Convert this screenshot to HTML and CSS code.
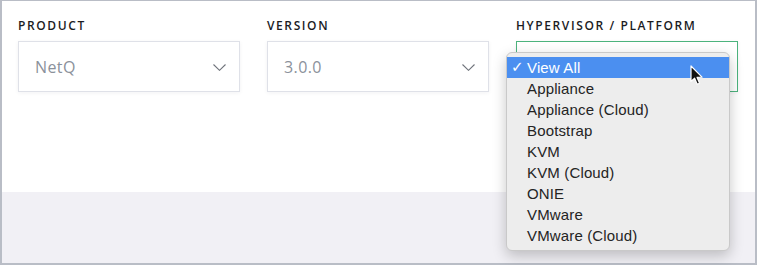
FILE: index.html
```html
<!DOCTYPE html>
<html lang="en">
<head>
    <meta charset="utf-8">
    <title>Downloads</title>
    <link rel="stylesheet" href="styles.css">
</head>
<body>
    <div id="frame">
        <section class="filters">
            <div class="field">
                <label>Product</label>
                <div class="select">
                    <span class="value">NetQ</span>
                    <svg class="chevron" width="13" height="7" viewBox="0 0 13 7"><path d="M0.5 0.5 L6.5 6.3 L12.5 0.5" fill="none" stroke="#6f737b" stroke-width="1.1"/></svg>
                </div>
            </div>
            <div class="field">
                <label>Version</label>
                <div class="select">
                    <span class="value">3.0.0</span>
                    <svg class="chevron" width="13" height="7" viewBox="0 0 13 7"><path d="M0.5 0.5 L6.5 6.3 L12.5 0.5" fill="none" stroke="#6f737b" stroke-width="1.1"/></svg>
                </div>
            </div>
            <div class="field">
                <label>Hypervisor / Platform</label>
                <div class="select focused">
                    <ul class="menu">
                        <li class="selected"><span class="check">✓</span>View All</li>
                        <li>Appliance</li>
                        <li>Appliance (Cloud)</li>
                        <li>Bootstrap</li>
                        <li>KVM</li>
                        <li>KVM (Cloud)</li>
                        <li>ONIE</li>
                        <li>VMware</li>
                        <li>VMware (Cloud)</li>
                    </ul>
                    <svg class="cursor" width="14" height="21" viewBox="0 0 14 21">
                        <path d="M1 1 L1 16.5 L4.6 13.2 L7.2 19.3 L9.6 18.3 L7.1 12.4 L12 12.2 Z" fill="#111" stroke="#fff" stroke-width="1.2" stroke-linejoin="round"/>
                    </svg>
                </div>
            </div>
        </section>
        <section class="footer"></section>
    </div>
</body>
</html>
```

FILE: styles.css
```css
html, body {
    margin: 0;
    height: 100%;
}

body {
    font-family: "Open Sans", sans-serif;
    background: #ffffff;
}

#frame {
    box-sizing: border-box;
    height: 100%;
    display: flex;
    flex-direction: column;
    border: 2px solid #b9bdc6;
    border-top-width: 1px;
}

.filters {
    display: grid;
    grid-template-columns: 222px 222px 222px;
    column-gap: 27px;
    height: 191px;
    box-sizing: border-box;
    padding: 17px 0 0 16px;
    background: #ffffff;
}

.footer {
    flex: 1;
    background: #f1f0f5;
}

.field label {
    display: block;
    height: 16px;
    margin-bottom: 7px;
    font-size: 12px;
    font-weight: 600;
    line-height: 16px;
    letter-spacing: 1.6px;
    text-transform: uppercase;
    color: #1b1c1f;
}

.select {
    position: relative;
    box-sizing: border-box;
    height: 51px;
    display: flex;
    align-items: center;
    justify-content: space-between;
    padding: 0 13px 0 16px;
    border: 1px solid #dfe1e8;
    box-shadow: 0 1px 4px rgba(30, 40, 60, 0.06);
}

.select.focused {
    border-color: #4cb37d;
}

.value {
    font-size: 16px;
    color: #8b919b;
    letter-spacing: 0.4px;
}

.chevron {
    margin-top: 1px;
}

/* --- native select popup --- */
.menu {
    position: absolute;
    top: 10px;
    left: -11px;
    z-index: 2;
    box-sizing: border-box;
    width: 224px;
    margin: 0;
    padding: 4px 0;
    list-style: none;
    background: #ededed;
    border: 1px solid #c9c9c9;
    border-radius: 6px;
    box-shadow: 0 5px 14px rgba(0, 0, 0, 0.22);
    font-family: "Liberation Sans", Arial, sans-serif;
    font-size: 15px;
    color: #242424;
}

.menu li {
    position: relative;
    height: 21px;
    line-height: 21px;
    padding-left: 20px;
    letter-spacing: 0.15px;
}

.menu li.selected {
    background: #4b8ff0;
    color: #ffffff;
}

.check {
    position: absolute;
    left: 4px;
    font-family: "DejaVu Sans", sans-serif;
    font-size: 15px;
    font-weight: 700;
}

.cursor {
    position: absolute;
    top: 23px;
    left: 173px;
    z-index: 3;
}
```
